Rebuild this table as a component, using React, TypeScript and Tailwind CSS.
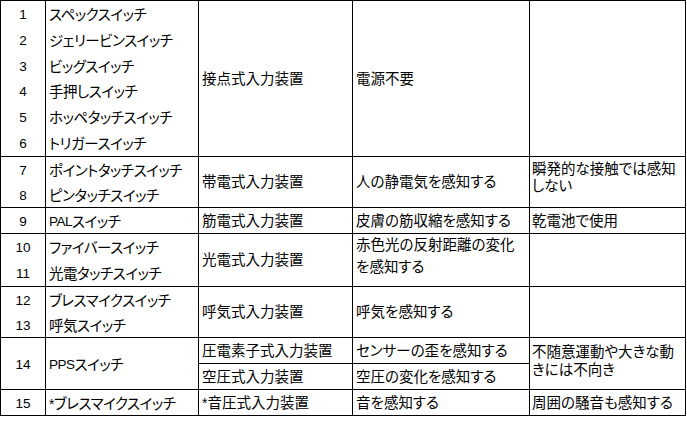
import React from "react";

const GRID = "grid grid-cols-[45px_153px_154px_177px_156px]";

function Lat({ children }: { children: React.ReactNode }) {
  return <span className="text-[13.5px]">{children}</span>;
}

function Star() {
  return <span className="text-[14px] align-[-4px]">*</span>;
}

function Cell({
  children,
  className = "",
}: {
  children?: React.ReactNode;
  className?: string;
}) {
  return (
    <div className={`border-r border-b border-black min-w-0 whitespace-nowrap ${className}`}>
      {children}
    </div>
  );
}

function NumStack({ items }: { items: string[] }) {
  return (
    <Cell className="flex flex-col">
      {items.map((n) => (
        <div key={n} className="flex-1 flex items-center justify-center pt-[2px] leading-[16px] text-[13.5px]">
          {n}
        </div>
      ))}
    </Cell>
  );
}

function NameStack({ items }: { items: React.ReactNode[] }) {
  return (
    <Cell className="flex flex-col tracking-[-0.5px]">
      {items.map((n, i) => (
        <div key={i} className="flex-1 flex items-center pl-[3px] pt-[2px] leading-[16px]">
          {n}
        </div>
      ))}
    </Cell>
  );
}

function Mid({ children }: { children?: React.ReactNode }) {
  return <Cell className="flex items-center pl-[3px] leading-[16px]">{children}</Cell>;
}

export default function App() {
  return (
    <div className="w-[687px] h-[425px] bg-white text-black text-[14.5px] font-['Liberation_Sans','Noto_Sans_CJK_JP',sans-serif] [font-feature-settings:'palt']">
      <div className="w-[686px] border-l border-t border-black">
        {/* 1-6 */}
        <div className={`${GRID} h-[156px]`}>
          <NumStack items={["1", "2", "3", "4", "5", "6"]} />
          <NameStack
            items={[
              "スペックスイッチ",
              "ジェリービンスイッチ",
              "ビッグスイッチ",
              "手押しスイッチ",
              "ホッペタッチスイッチ",
              "トリガースイッチ",
            ]}
          />
          <Mid>接点式入力装置</Mid>
          <Mid>電源不要</Mid>
          <Cell />
        </div>
        {/* 7-8 */}
        <div className={`${GRID} h-[51px]`}>
          <NumStack items={["7", "8"]} />
          <NameStack items={["ポイントタッチスイッチ", "ピンタッチスイッチ"]} />
          <Mid>帯電式入力装置</Mid>
          <Mid>人の静電気を感知する</Mid>
          <Cell className="pl-[2px] pt-[4px] leading-[17px]">
            <div>瞬発的な接触では感知</div>
            <div>しない</div>
          </Cell>
        </div>
        {/* 9 */}
        <div className={`${GRID} h-[26px]`}>
          <NumStack items={["9"]} />
          <NameStack
            items={[
              <>
                <Lat>PAL</Lat>スイッチ
              </>,
            ]}
          />
          <Mid>筋電式入力装置</Mid>
          <Mid>皮膚の筋収縮を感知する</Mid>
          <Cell className="flex items-center pl-[2px] leading-[16px]">乾電池で使用</Cell>
        </div>
        {/* 10-11 */}
        <div className={`${GRID} h-[53px]`}>
          <NumStack items={["10", "11"]} />
          <NameStack items={["ファイバースイッチ", "光電タッチスイッチ"]} />
          <Mid>光電式入力装置</Mid>
          <Cell className="pl-[3px] pt-[1px] leading-[21.5px]">
            <div>赤色光の反射距離の変化</div>
            <div>を感知する</div>
          </Cell>
          <Cell />
        </div>
        {/* 12-13 */}
        <div className={`${GRID} h-[51px]`}>
          <NumStack items={["12", "13"]} />
          <NameStack items={["ブレスマイクスイッチ", "呼気スイッチ"]} />
          <Mid>呼気式入力装置</Mid>
          <Mid>呼気を感知する</Mid>
          <Cell />
        </div>
        {/* 14 */}
        <div className={`${GRID} h-[52px]`}>
          <NumStack items={["14"]} />
          <NameStack
            items={[
              <>
                <Lat>PPS</Lat>スイッチ
              </>,
            ]}
          />
          <Cell className="flex flex-col">
            <div className="h-[26px] border-b border-black flex items-center pl-[3px] leading-[16px]">
              圧電素子式入力装置
            </div>
            <div className="flex-1 flex items-center pl-[3px] leading-[16px]">空圧式入力装置</div>
          </Cell>
          <Cell className="flex flex-col">
            <div className="h-[26px] border-b border-black flex items-center pl-[3px] leading-[16px]">
              センサーの歪を感知する
            </div>
            <div className="flex-1 flex items-center pl-[3px] leading-[16px]">空圧の変化を感知する</div>
          </Cell>
          <Cell className="pl-[2px] pt-[5px] leading-[18px]">
            <div>不随意運動や大きな動</div>
            <div>きには不向き</div>
          </Cell>
        </div>
        {/* 15 */}
        <div className={`${GRID} h-[26px]`}>
          <NumStack items={["15"]} />
          <NameStack
            items={[
              <>
                <Star />
                ブレスマイクスイッチ
              </>,
            ]}
          />
          <Mid>
            <Star />
            音圧式入力装置
          </Mid>
          <Mid>音を感知する</Mid>
          <Cell className="flex items-center pl-[2px] leading-[16px]">周囲の騒音も感知する</Cell>
        </div>
      </div>
    </div>
  );
}
